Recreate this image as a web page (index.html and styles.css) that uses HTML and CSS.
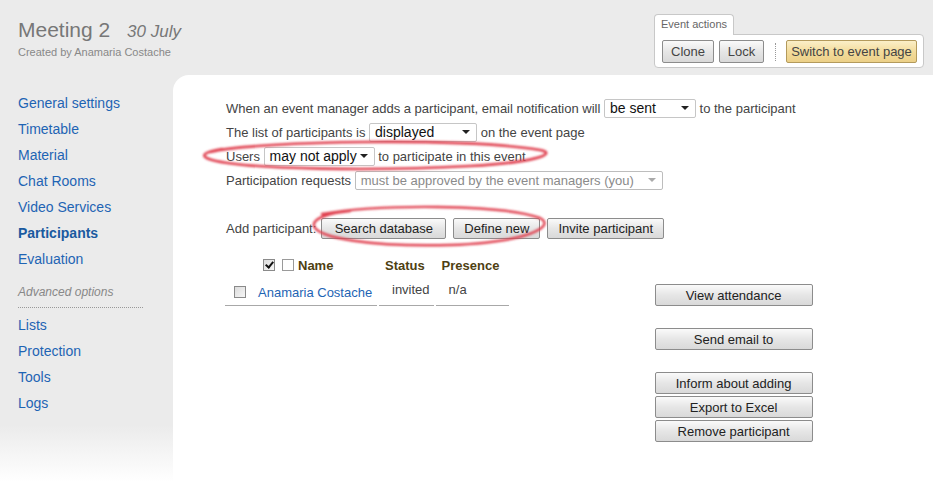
FILE: index.html
```html
<!DOCTYPE html>
<html>
<head>
<meta charset="utf-8">
<link rel="stylesheet" href="styles.css">
</head>
<body>
<header class="top">
  <div class="title-block">
    <h1 class="title">Meeting 2 <span class="date">30 July</span></h1>
    <div class="creator">Created by Anamaria Costache</div>
  </div>
  <div class="actions">
    <div class="actions-tab">Event actions</div>
    <div class="actions-box">
      <button class="btn btn-sm w-clone">Clone</button>
      <button class="btn btn-sm w-lock">Lock</button>
      <span class="sep"></span>
      <button class="btn btn-sm btn-gold">Switch to event page</button>
    </div>
  </div>
</header>
<div class="main">
  <nav class="sidebar">
    <a class="nav-link">General settings</a>
    <a class="nav-link">Timetable</a>
    <a class="nav-link">Material</a>
    <a class="nav-link">Chat Rooms</a>
    <a class="nav-link">Video Services</a>
    <a class="nav-link active">Participants</a>
    <a class="nav-link">Evaluation</a>
    <div class="nav-section">Advanced options</div>
    <a class="nav-link">Lists</a>
    <a class="nav-link">Protection</a>
    <a class="nav-link">Tools</a>
    <a class="nav-link">Logs</a>
  </nav>
  <section class="content">
    <div class="line">When an event manager adds a participant, email notification will <span class="sel w-sent">be sent<i class="arrow"></i></span> to the participant</div>
    <div class="line">The list of participants is <span class="sel w-disp">displayed<i class="arrow"></i></span> on the event page</div>
    <div class="line">Users <span class="sel w-apply">may not apply<i class="arrow"></i></span> to participate in this event</div>
    <div class="line">Participation requests <span class="sel sel-disabled w-req">must be approved by the event managers (you)<i class="arrow"></i></span></div>
    <div class="add-row">
      <span class="add-label">Add participant:</span>
      <button class="btn w-search">Search database</button>
      <button class="btn w-define">Define new</button>
      <button class="btn w-invite">Invite participant</button>
    </div>
    <div class="lower">
      <table class="plist">
        <thead>
          <tr>
            <th class="th-name"><span class="cb cb-checked"></span><span class="cb cb-faded"></span>Name</th>
            <th>Status</th>
            <th>Presence</th>
          </tr>
        </thead>
        <tbody>
          <tr>
            <td class="td-name"><span class="cb"></span><a class="plink">Anamaria Costache</a></td>
            <td class="td-top">invited</td>
            <td class="td-top">n/a</td>
          </tr>
        </tbody>
      </table>
      <div class="side-actions">
        <button class="btn btn-wide">View attendance</button>
        <button class="btn btn-wide gap">Send email to</button>
        <button class="btn btn-wide gap">Inform about adding</button>
        <button class="btn btn-wide">Export to Excel</button>
        <button class="btn btn-wide">Remove participant</button>
      </div>
    </div>
  </section>
</div>
<svg class="marks" width="933" height="482" viewBox="0 0 933 482">
  <defs>
    <filter id="soft" x="-10%" y="-50%" width="120%" height="200%">
      <feGaussianBlur stdDeviation="0.8"/>
    </filter>
  </defs>
  <g fill="none" stroke="#e0404f" stroke-linecap="round" filter="url(#soft)">
    <path d="M210 152 C 260 140, 470 138, 540 150 C 560 154, 530 163, 470 166 C 380 171, 250 170, 212 160 C 198 156, 204 152, 222 149" stroke-width="2.6"/>
    <path d="M322 214 C 380 204, 500 204, 540 218 C 556 226, 530 242, 450 245 C 370 247, 318 238, 314 226 C 312 218, 330 213, 350 211" stroke-width="2.4"/>
  </g>
</svg>
</body>
</html>
```
FILE: styles.css
```css
* { box-sizing: border-box; }
html, body { margin: 0; padding: 0; }
body {
  width: 933px;
  height: 482px;
  overflow: hidden;
  background: #ebebeb;
  font-family: "Liberation Sans", Arial, sans-serif;
  color: #444;
  position: relative;
}
.top {
  height: 75px;
  display: flex;
  justify-content: space-between;
  padding: 14px 9px 0 18px;
}
.title {
  margin: 2px 0 0;
  font-size: 21px;
  font-weight: normal;
  color: #777;
  line-height: 28px;
}
.date {
  font-style: italic;
  font-size: 17px;
  margin-left: 11px;
}
.creator {
  font-size: 11px;
  color: #888;
}
.actions { width: 270px; }
.actions-tab {
  display: inline-block;
  height: 21px;
  padding: 3px 6px 0 6px;
  font-size: 11px;
  color: #666;
  background: #fff;
  border: 1px solid #c8c8c8;
  border-bottom: none;
  border-radius: 4px 4px 0 0;
  position: relative;
  z-index: 1;
  margin-bottom: -1px;
}
.actions-box {
  height: 34px;
  background: #fff;
  border: 1px solid #c8c8c8;
  border-radius: 0 4px 4px 4px;
  display: flex;
  align-items: center;
  padding: 1px 5px 0 7px;
}
.btn {
  font-family: "Liberation Sans", Arial, sans-serif;
  font-size: 13px;
  color: #222;
  height: 21px;
  padding: 0;
  border: 1px solid #8c8c8c;
  border-radius: 2px;
  background: linear-gradient(#fafafa, #e6e6e6 50%, #d9d9d9);
  line-height: 19px;
  white-space: nowrap;
  cursor: default;
}
.btn-sm {
  height: 23px;
  color: #444;
  margin-right: 5px;
}
.w-clone { width: 52px; }
.w-lock { width: 45px; margin-right: 0; }
.btn-gold {
  width: 131px;
  background: linear-gradient(#fbefc8, #f3dc9c 50%, #ecd088);
  border-color: #b39a5c;
  margin-right: 0;
}
.sep {
  width: 0;
  height: 18px;
  border-left: 1px dotted #999;
  margin: 0 10px 0 11px;
}
.main {
  display: flex;
  height: 407px;
}
.sidebar {
  width: 173px;
  flex: none;
  padding: 15px 0 0 18px;
  display: flex;
  flex-direction: column;
  align-items: flex-start;
  background: linear-gradient(#ebebeb 0, #ebebeb 350px, #ffffff 407px);
}
.nav-link {
  font-size: 14px;
  line-height: 26px;
  color: #1e64b4;
}
.nav-link.active { font-weight: bold; color: #1a5aa0; }
.nav-section {
  font-size: 12px;
  font-style: italic;
  color: #888;
  line-height: 20px;
  margin-top: 10px;
  width: 125px;
  padding-bottom: 5px;
  border-bottom: 1px dotted #999;
  margin-bottom: 4px;
}
.content {
  flex: 1;
  background: #fff;
  border-top-left-radius: 16px;
  padding: 21px 0 0 53px;
  font-size: 13px;
}
.line {
  height: 24px;
  display: flex;
  align-items: center;
  white-space: pre;
}
.sel {
  display: inline-flex;
  align-items: center;
  justify-content: space-between;
  height: 19px;
  border: 1px solid #c6c6c6;
  border-radius: 2px;
  padding: 0 6px 0 5px;
  font-size: 14px;
  color: #111;
  background: #fff;
}
.sel-disabled { color: #8a8a8a; font-size: 13px; border-color: #bdbdbd; }
.arrow {
  width: 0; height: 0;
  border-left: 4px solid transparent;
  border-right: 4px solid transparent;
  border-top: 4px solid #222;
}
.sel-disabled .arrow { border-top-color: #aaa; }
.w-sent { width: 92px; }
.w-disp { width: 108px; }
.w-apply { width: 111px; }
.w-req { width: 308px; }
.add-row {
  margin-top: 26px;
  display: flex;
  align-items: center;
  gap: 7px;
}
.add-label { margin-right: -2px; }
.w-search { width: 125px; }
.w-define { width: 87px; }
.w-invite { width: 117px; }
.lower {
  display: flex;
  align-items: flex-start;
}
.plist {
  border-collapse: separate;
  border-spacing: 2px 0;
  margin: 16px 0 0 -3px;
}
.plist th {
  font-size: 13px;
  font-weight: bold;
  color: #4e3f12;
  text-align: left;
  padding: 3px 2px 5px 4px;
  white-space: nowrap;
}
.th-name { padding-left: 38px !important; }
.plist th + th { padding-left: 6px; }
.plist td {
  border-bottom: 1px solid #a8a8a8;
  padding: 7px 4px 0 4px;
  height: 28px;
  vertical-align: top;
}
.td-name { padding-left: 9px !important; width: 152px; }
.td-top { padding-top: 4px !important; padding-left: 13px !important; }
.plist td + td { width: 54px; }
.plist td + td + td { width: 73px; padding-left: 13px !important; }
.plink { color: #1e64b4; }
.cb {
  display: inline-block;
  width: 12px;
  height: 12px;
  border: 1px solid #8a8a8a;
  background: linear-gradient(135deg, #dcdcdc, #f6f6f6);
  vertical-align: -1px;
  margin-right: 12px;
  position: relative;
}
.th-name .cb { margin-right: 7px; }
.th-name .cb-faded { margin-right: 4px; }
.cb-faded { border-color: #9a9a9a; background: #fff; }
.cb-checked::after {
  content: "";
  position: absolute;
  left: 3px; top: 0px;
  width: 3px; height: 6px;
  border-right: 2px solid #111;
  border-bottom: 2px solid #111;
  transform: rotate(40deg);
}
.side-actions {
  margin: 45px 0 0 144px;
  display: flex;
  flex-direction: column;
  gap: 2px;
}
.btn-wide {
  width: 158px;
  height: 22px;
}
.gap { margin-top: 20px; }
.marks {
  position: absolute;
  left: 0;
  top: 0;
  pointer-events: none;
}
```
